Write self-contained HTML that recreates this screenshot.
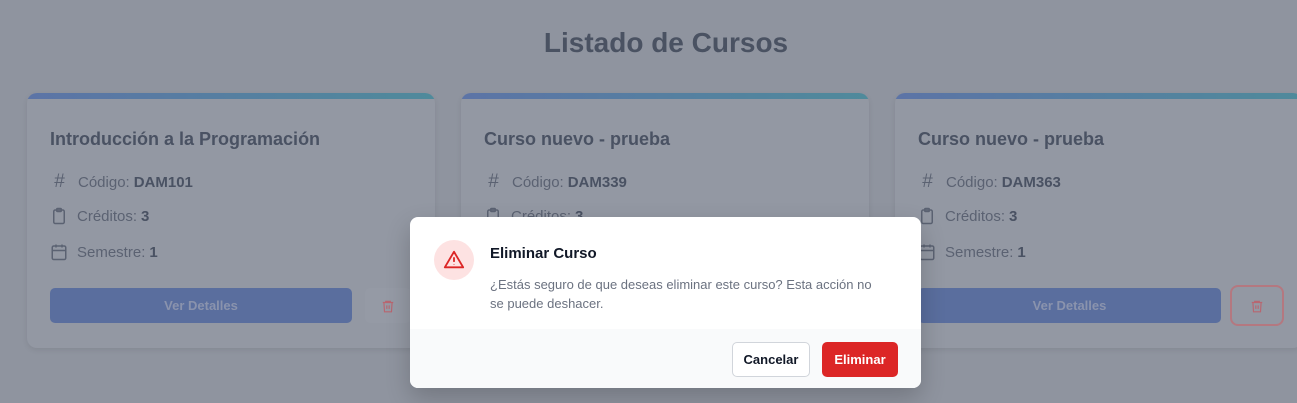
<!DOCTYPE html>
<html><head><meta charset="utf-8"><style>
*{box-sizing:border-box;margin:0;padding:0}
body{width:1297px;height:403px;overflow:hidden;background:#8f949f;font-family:"Liberation Sans",sans-serif;position:relative}
h1{position:absolute;top:27px;left:0;width:1332px;text-align:center;font-size:28px;font-weight:bold;color:#4a5262}
.card{position:absolute;top:93px;width:408px;height:255px;background:#9398a3;border-radius:10px;overflow:hidden;box-shadow:0 2px 6px rgba(0,0,0,.08)}
.bar{height:6px;background:linear-gradient(90deg,#5c74a6,#4f8a9b)}
.t{position:absolute;left:23px;top:36px;font-size:18px;font-weight:bold;color:#4a5263}
.row{position:absolute;left:23px;font-size:15px;color:#5b6272;display:flex;align-items:center}
.row b{color:#4a5263;margin-left:4px}
.row svg{margin-right:9px}
.vd{position:absolute;left:23px;top:195px;width:302px;height:35px;border-radius:5px;background:#5a6e9e;color:#8a93ad;font-weight:bold;font-size:13px;text-align:center;line-height:35px}
.tr{position:absolute;left:338px;top:195px;width:46px;height:35px;border-radius:5px;display:flex;align-items:center;justify-content:center}
.modal{position:absolute;left:410px;top:217px;width:511px;height:171px;background:#fff;border-radius:8px;overflow:hidden;box-shadow:0 10px 25px rgba(0,0,0,.2)}
.foot{position:absolute;left:0;top:112px;width:100%;height:59px;background:#f9fafb}
.btn{position:absolute;top:13px;height:35px;border-radius:5px;font-size:13px;font-weight:bold;line-height:33px;text-align:center}
.hash{width:19px;margin-right:9px;font-size:19px;color:#5b6272;text-align:center}
</style></head><body>
<h1>Listado de Cursos</h1>

<div class="card" style="left:27px">
<div class="bar"></div>
<div class="t">Introducción a la Programación</div>
<div class="row" style="top:78px"><span class="hash">#</span>Código:<b>DAM101</b></div>
<div class="row" style="top:114px"><svg width="18" height="18" viewBox="0 0 24 24" fill="none" stroke="#5b6272" stroke-width="2"><rect x="5" y="4" width="14" height="18" rx="2"/><rect x="9" y="2" width="6" height="4" rx="1"/></svg>Créditos:<b>3</b></div>
<div class="row" style="top:150px"><svg width="18" height="18" viewBox="0 0 24 24" fill="none" stroke="#5b6272" stroke-width="2"><rect x="3" y="4" width="18" height="18" rx="2"/><path d="M8 2v4M16 2v4M3 10h18"/></svg>Semestre:<b>1</b></div>
<div class="vd">Ver Detalles</div>
<div class="tr" style="background:#959aa5"><svg width="14" height="14" viewBox="0 0 24 24" fill="none" stroke="#b86670" stroke-width="2"><path d="M3 6h18M8 6V4h8v2M5 6l1 16h12l1-16M10 11v6M14 11v6"/></svg></div>
</div>

<div class="card" style="left:461px">
<div class="bar"></div>
<div class="t">Curso nuevo - prueba</div>
<div class="row" style="top:78px"><span class="hash">#</span>Código:<b>DAM339</b></div>
<div class="row" style="top:114px"><svg width="18" height="18" viewBox="0 0 24 24" fill="none" stroke="#5b6272" stroke-width="2"><rect x="5" y="4" width="14" height="18" rx="2"/><rect x="9" y="2" width="6" height="4" rx="1"/></svg>Créditos:<b>3</b></div>
</div>

<div class="card" style="left:895px">
<div class="bar"></div>
<div class="t">Curso nuevo - prueba</div>
<div class="row" style="top:78px"><span class="hash">#</span>Código:<b>DAM363</b></div>
<div class="row" style="top:114px"><svg width="18" height="18" viewBox="0 0 24 24" fill="none" stroke="#5b6272" stroke-width="2"><rect x="5" y="4" width="14" height="18" rx="2"/><rect x="9" y="2" width="6" height="4" rx="1"/></svg>Créditos:<b>3</b></div>
<div class="row" style="top:150px"><svg width="18" height="18" viewBox="0 0 24 24" fill="none" stroke="#5b6272" stroke-width="2"><rect x="3" y="4" width="18" height="18" rx="2"/><path d="M8 2v4M16 2v4M3 10h18"/></svg>Semestre:<b>1</b></div>
<div class="vd" style="left:23px;width:303px">Ver Detalles</div>
<div class="tr" style="left:335px;width:54px;height:41px;top:192px;border:2px solid #b47880;border-radius:8px"><svg width="14" height="14" viewBox="0 0 24 24" fill="none" stroke="#b86670" stroke-width="2"><path d="M3 6h18M8 6V4h8v2M5 6l1 16h12l1-16M10 11v6M14 11v6"/></svg></div>
</div>

<div class="modal">
<div style="position:absolute;left:24px;top:23px;width:40px;height:40px;border-radius:50%;background:#fde2e2;display:flex;align-items:center;justify-content:center"><svg width="22" height="22" viewBox="0 0 24 24" fill="none" stroke="#dc2626" stroke-width="2" stroke-linejoin="round"><path d="M12 3L2 20h20z"/><path d="M12 9v5M12 17v.5"/></svg></div>
<div style="position:absolute;left:80px;top:28px;font-size:15px;font-weight:bold;color:#111827">Eliminar Curso</div>
<div style="position:absolute;left:80px;top:58px;width:398px;font-size:13px;line-height:19px;color:#6b7280">¿Estás seguro de que deseas eliminar este curso? Esta acción no se puede deshacer.</div>
<div class="foot">
<div class="btn" style="left:322px;width:78px;border:1px solid #d1d5db;background:#fff;color:#111827">Cancelar</div>
<div class="btn" style="left:412px;width:76px;background:#dc2626;color:#fff;line-height:35px">Eliminar</div>
</div>
</div>
</body></html>
